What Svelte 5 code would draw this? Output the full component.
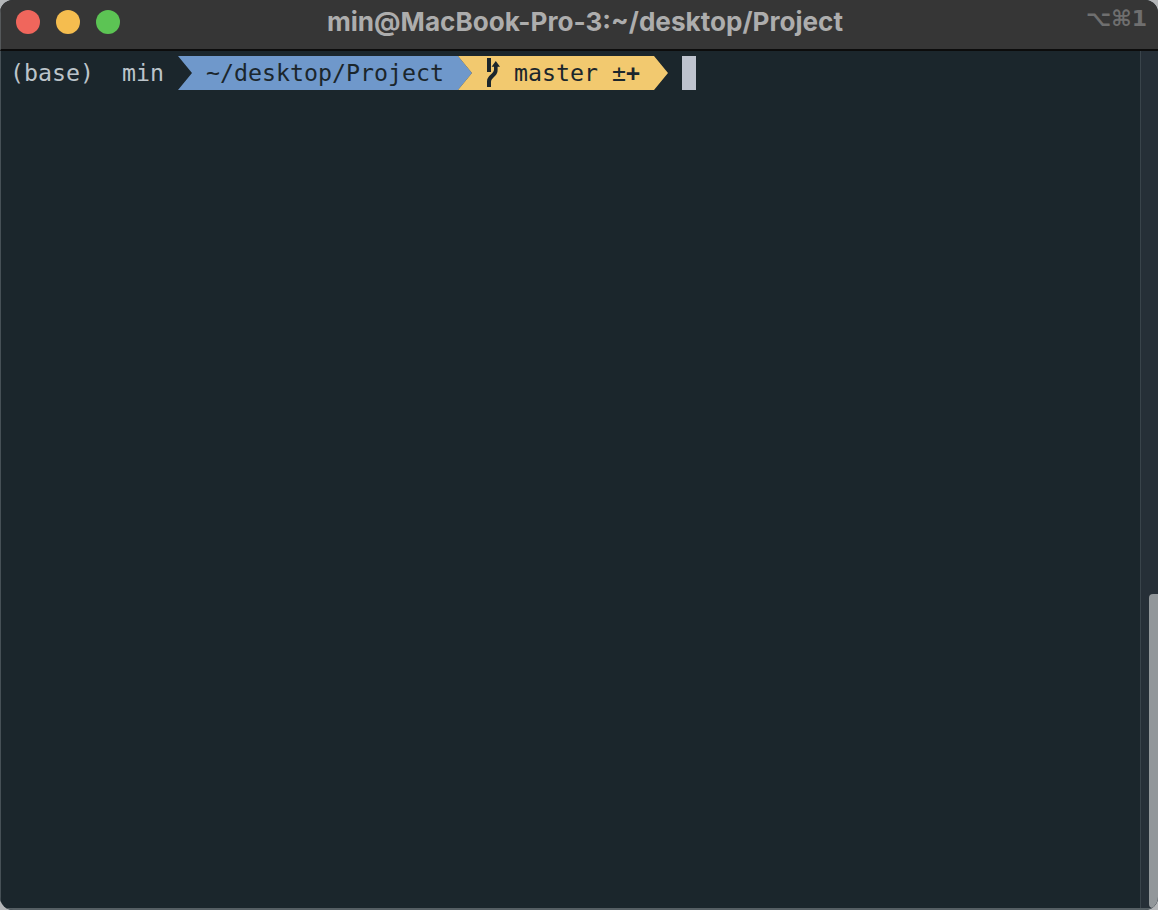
<script>
  const title = 'min@MacBook-Pro-3:~/desktop/Project'
  const lights = ['red', 'yellow', 'green']
</script>

<div class="window">
  <header class="titlebar">
    <div class="lights">
      {#each lights as c}
        <span class="light {c}"></span>
      {/each}
    </div>
    <span class="title">{title}</span>
    <span class="shortcut">⌥⌘1</span>
  </header>

  <div class="content">
    <main class="terminal">
      <div class="prompt">
        <span class="plain">(base)  min</span>
        <span class="gap"></span>
        <span class="seg dir">~/desktop/Project</span>
        <span class="seg git">
          <svg class="branch" width="14" height="34" viewBox="0 0 14 34" aria-hidden="true">
            <path d="M1 2h4v14H1z" />
            <path d="M9.8 5L14 10.8H11.6V14C11.6 18 9.5 19.5 7.5 21.5C5.8 23.2 5 24 5 26V31H1V25.5C1 22.5 2.5 20.8 4.8 18.6C6.8 16.6 8 15.5 8 13.5V10.8H5.6Z" />
          </svg>
          <span class="branch-name">master ±<b>+</b></span>
        </span>
        <span class="cursor"></span>
      </div>
    </main>
    <aside class="gutter">
      <div class="thumb"></div>
    </aside>
  </div>
</div>

<style>
  :global(body) {
    background: #b4b6b8;
  }
  .window {
    height: 910px;
    display: flex;
    flex-direction: column;
    border-radius: 13px;
    overflow: hidden;
    background: #1b262c;
  }
  .titlebar {
    height: 49px;
    flex: none;
    display: flex;
    align-items: center;
    padding: 0 11px 0 16px;
    background: #363636;
    border-bottom: 2px solid #0c0c0c;
    border-left: 1px solid #55585a;
  }
  .lights {
    display: flex;
    gap: 16px;
    margin-top: -5px;
    margin-left: -1px;
  }
  .light {
    width: 24px;
    height: 24px;
    border-radius: 50%;
  }
  .red { background: #f0665c; }
  .yellow { background: #f5bd4f; }
  .green { background: #5cc454; }
  .title {
    flex: 1;
    text-align: center;
    font-family: Inter, "Liberation Sans", sans-serif;
    font-weight: 700;
    font-size: 26.1px;
    color: #adadad;
    margin-top: -6px;
    padding-right: 36px;
  }
  .shortcut {
    font-family: "DejaVu Sans", sans-serif;
    font-weight: 700;
    font-size: 22px;
    color: #6f6f6f;
    margin-top: -12px;
  }
  .content {
    flex: 1;
    min-height: 0;
    display: flex;
    border-bottom: 2px solid #565f64;
  }
  .terminal {
    flex: 1;
    padding: 5px 0 0 10px;
    border-left: 1px solid #465056;
  }
  .prompt {
    display: flex;
    height: 34px;
    margin-left: -1px;
    font-family: "DejaVu Sans Mono", monospace;
    font-size: 23.25px;
    line-height: 34px;
    white-space: pre;
    color: #bcc4ca;
  }
  .plain { width: 154px; }
  .gap { width: 14px; }
  .seg {
    display: flex;
    color: #1b262c;
    --tip: 14px;
    clip-path: polygon(0 0, calc(100% - var(--tip)) 0, 100% 50%, calc(100% - var(--tip)) 100%, 0 100%, var(--tip) 50%);
  }
  .dir {
    width: 294px;
    box-sizing: border-box;
    padding-left: 28px;
    background: #6f98cb;
  }
  .git {
    width: 210px;
    box-sizing: border-box;
    margin-left: -14px;
    padding-left: 28px;
    background: #f2c96f;
  }
  .branch {
    flex: none;
    fill: #1b262c;
    margin-right: 14px;
  }
  .branch-name b {
    font-weight: 700;
  }
  .cursor {
    width: 14px;
    margin-left: 14px;
    background: #bec3ce;
  }
  .gutter {
    width: 18px;
    flex: none;
    box-sizing: border-box;
    padding: 543px 0 0 8px;
    background: #262f37;
    border-left: 1px solid #3a444b;
    display: flex;
  }
  .thumb {
    flex: 1;
    background: #92979a;
    border-radius: 8px 0 10px 8px;
  }
</style>
